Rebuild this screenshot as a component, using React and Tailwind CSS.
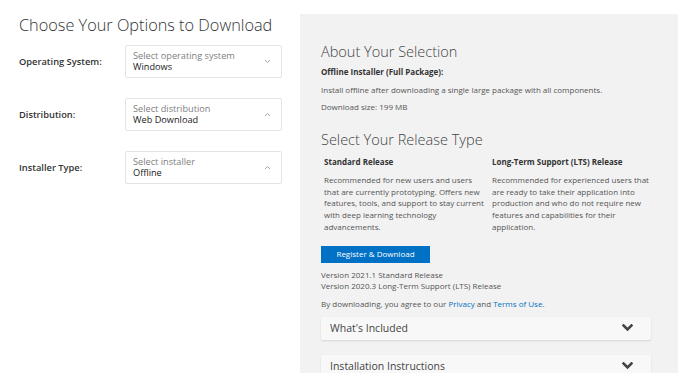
import React from 'react';

const options = [
  { label: 'Operating System:', placeholder: 'Select operating system', value: 'Windows', open: false },
  { label: 'Distribution:', placeholder: 'Select distribution', value: 'Web Download', open: true },
  { label: 'Installer Type:', placeholder: 'Select installer', value: 'Offline', open: true },
];

function SmallChevron({ up }) {
  return (
    <svg width="7" height="5" viewBox="0 0 7 5" className="text-[#9a9a9a]">
      <path d={up ? 'M1 4 L3.5 1.5 L6 4' : 'M1 1 L3.5 3.5 L6 1'} fill="none" stroke="currentColor" strokeWidth="0.9" />
    </svg>
  );
}

function BigChevron() {
  return (
    <svg width="11" height="8" viewBox="0 0 11 8" className="text-[#444]">
      <path d="M1.5 1.5 L5.5 5.5 L9.5 1.5" fill="none" stroke="currentColor" strokeWidth="2.6" strokeLinecap="square" />
    </svg>
  );
}

function SelectRow({ label, placeholder, value, open }) {
  return (
    <div className="flex items-center h-[33px]">
      <div className="w-[106px] text-[9.3px] font-semibold text-[#333]">{label}</div>
      <div className="w-[157px] h-[33px] border border-[#e4e4e4] rounded-[2px] bg-white flex items-center pl-[7px] pr-[10px]">
        <div className="flex-1">
          <div className="text-[9.2px] leading-[10px] text-[#808080]">{placeholder}</div>
          <div className="text-[9.2px] leading-[11px] text-[#222]">{value}</div>
        </div>
        <SmallChevron up={open} />
      </div>
    </div>
  );
}

function Accordion({ title }) {
  return (
    <div className="w-[330px] h-[23px] bg-[#f8f8f8] rounded-[2px] shadow-[0_1px_2px_rgba(0,0,0,0.12)] flex items-center justify-between pl-[9px] pr-[18px]">
      <span className="text-[10.5px] text-[#444]">{title}</span>
      <BigChevron />
    </div>
  );
}

export default function App() {
  return (
    <div className="flex w-[692px] h-[373px] overflow-hidden bg-white font-['Open_Sans',sans-serif]">
      <div className="w-[300px] pl-[19px] pt-[13px]">
        <h1 className="text-[16.3px] font-light text-[#333] leading-[24px]">
          Choose Your Options to Download
        </h1>
        <div className="flex flex-col gap-[20px] mt-[8px]">
          {options.map((o) => (
            <SelectRow key={o.label} {...o} />
          ))}
        </div>
      </div>

      <div className="w-[378px] mt-[14px] bg-[#f2f2f2] pl-[21px] pt-[28px] text-[#555] text-[8px] leading-[12px]">
        <h2 className="text-[14.5px] font-light text-[#444] leading-[20px]">About Your Selection</h2>
        <p className="font-bold text-[#333] mt-[4px]">Offline Installer (Full Package):</p>
        <p className="mt-[6px]">Install offline after downloading a single large package with all components.</p>
        <p className="mt-[5px]">Download size: 199 MB</p>

        <h2 className="text-[14.5px] font-light text-[#444] leading-[20px] mt-[17px]">Select Your Release Type</h2>
        <div className="grid grid-cols-[168px_160px] mt-[6px] pl-[3px]">
          <div>
            <p className="font-bold text-[#333]">Standard Release</p>
            <p className="leading-[11.7px] mt-[6px] w-[163px]">
              Recommended for new users and users that are currently prototyping. Offers new features, tools, and support to stay current with deep learning technology advancements.
            </p>
          </div>
          <div>
            <p className="font-bold text-[#333]">Long-Term Support (LTS) Release</p>
            <p className="leading-[11.7px] mt-[6px]">
              Recommended for experienced users that are ready to take their application into production and who do not require new features and capabilities for their application.
            </p>
          </div>
        </div>

        <button className="mt-[13px] w-[109px] h-[17px] bg-[#0071c5] text-white text-[8px] flex items-center justify-center">
          Register &amp; Download
        </button>
        <div className="leading-[11px] mt-[6px]">
          <p>Version 2021.1 Standard Release</p>
          <p>Version 2020.3 Long-Term Support (LTS) Release</p>
        </div>
        <p className="mt-[7px]">
          By downloading, you agree to our <span className="text-[#0071c5]">Privacy</span> and{' '}
          <span className="text-[#0071c5]">Terms of Use</span>.
        </p>
        <div className="flex flex-col gap-[15px] mt-[7px]">
          <Accordion title="What's Included" />
          <Accordion title="Installation Instructions" />
        </div>
      </div>
    </div>
  );
}
